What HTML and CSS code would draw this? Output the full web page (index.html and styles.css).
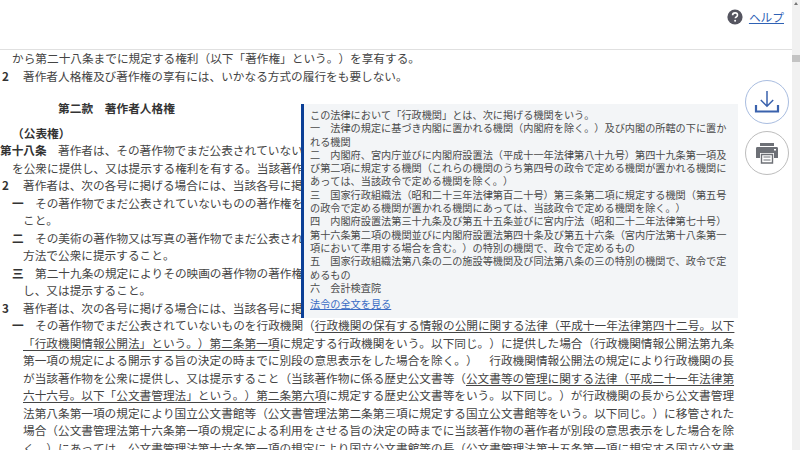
FILE: index.html
```html
<!DOCTYPE html>
<html lang="ja">
<head>
<meta charset="utf-8">
<title>法令</title>
<link rel="stylesheet" href="styles.css">
</head>
<body>
<div class="page">
  <div class="viewport">
    <header class="top">
      <svg class="help-icon" viewBox="0 0 16 16" width="16" height="16"><circle cx="8" cy="8" r="7.6" fill="#555560"/><path d="M5.6 6.200c0-1.500 1.100-2.300 2.500-2.300s2.400.8 2.400 2.100c0 1-.6 1.500-1.300 2-.6.4-.9.7-.9 1.300" fill="none" stroke="#fff" stroke-width="1.600"/><circle cx="8.100" cy="11.700" r="1" fill="#fff"/></svg>
      <a class="help-link" href="#">ヘルプ</a>
    </header>
    <main class="content">
      <p class="para first">から第二十八条までに規定する権利（以下「著作権」という。）を享有する。</p>
      <p class="para num"><b class="n">2</b>著作者人格権及び著作権の享有には、いかなる方式の履行をも要しない。</p>
      <h3 class="section">第二款　著作者人格権</h3>
      <h4 class="caption">（公表権）</h4>
      <p class="para article"><b class="art">第十八条</b>著作者は、その著作物でまだ公表されていないもの（その同意を得ないで公表された著作物を含む。以下この条において同じ。）<br>を公衆に提供し、又は提示する権利を有する。当該著作物を原著作物とする二次的著作物についても、同様とする。</p>
      <p class="para num"><b class="n">2</b>著作者は、次の各号に掲げる場合には、当該各号に掲げる行為について同意したものと推定する。</p>
      <p class="para item"><b class="k">一</b>その著作物でまだ公表されていないものの著作権を譲渡した場合　当該著作物をその著作権の行使により公衆に提供し、又は提示する<br>こと。</p>
      <p class="para item"><b class="k">二</b>その美術の著作物又は写真の著作物でまだ公表されていないものの原作品を譲渡した場合　これらの著作物をその原作品による展示の<br>方法で公衆に提示すること。</p>
      <p class="para item"><b class="k">三</b>第二十九条の規定によりその映画の著作物の著作権が映画製作者に帰属した場合　当該著作物をその著作権の行使により公衆に提供<br>し、又は提示すること。</p>
      <p class="para num"><b class="n">3</b>著作者は、次の各号に掲げる場合には、当該各号に掲げる行為について同意したものとみなす。</p>
      <p class="para item"><b class="k">一</b>その著作物でまだ公表されていないものを行政機関（<u>行政機関の保有する情報の公開に関する法律（平成十一年法律第四十二号。以下<br>「行政機関情報公開法」という。）第二条第一項</u>に規定する行政機関をいう。以下同じ。）に提供した場合（行政機関情報公開法第九条<br>第一項の規定による開示する旨の決定の時までに別段の意思表示をした場合を除く。）　行政機関情報公開法の規定により行政機関の長<br>が当該著作物を公衆に提供し、又は提示すること（当該著作物に係る歴史公文書等（<u>公文書等の管理に関する法律（平成二十一年法律第<br>六十六号。以下「公文書管理法」という。）第二条第六項</u>に規定する歴史公文書等をいう。以下同じ。）が行政機関の長から公文書管理<br>法第八条第一項の規定により国立公文書館等（公文書管理法第二条第三項に規定する国立公文書館等をいう。以下同じ。）に移管された<br>場合（公文書管理法第十六条第一項の規定による利用をさせる旨の決定の時までに当該著作物の著作者が別段の意思表示をした場合を除<br>く。）にあっては、公文書管理法第十六条第一項の規定により国立公文書館等の長（公文書管理法第十五条第一項に規定する国立公文書</p>

      <aside class="popup">
        <p>この法律において「行政機関」とは、次に掲げる機関をいう。</p>
        <p>一　法律の規定に基づき内閣に置かれる機関（内閣府を除く。）及び内閣の所轄の下に置かれる機関</p>
        <p>二　内閣府、宮内庁並びに内閣府設置法（平成十一年法律第八十九号）第四十九条第一項及び第二項に規定する機関（これらの機関のうち第四号の政令で定める機関が置かれる機関にあっては、当該政令で定める機関を除く。）</p>
        <p>三　国家行政組織法（昭和二十三年法律第百二十号）第三条第二項に規定する機関（第五号の政令で定める機関が置かれる機関にあっては、当該政令で定める機関を除く。）</p>
        <p>四　内閣府設置法第三十九条及び第五十五条並びに宮内庁法（昭和二十二年法律第七十号）第十六条第二項の機関並びに内閣府設置法第四十条及び第五十六条（宮内庁法第十八条第一項において準用する場合を含む。）の特別の機関で、政令で定めるもの</p>
        <p>五　国家行政組織法第八条の二の施設等機関及び同法第八条の三の特別の機関で、政令で定めるもの</p>
        <p>六　会計検査院</p>
        <a class="popup-link" href="#">法令の全文を見る</a>
      </aside>

      <div class="float-actions">
        <button class="round blue" aria-label="ダウンロード">
          <svg viewBox="0 0 26 26" width="26" height="26"><path d="M13 2v15M6.800 11l6.200 6.200L19.200 11" fill="none" stroke="#3a62ad" stroke-width="1.500"/><path d="M2 16v6.500h22V16" fill="none" stroke="#3a62ad" stroke-width="2.200"/></svg>
        </button>
        <button class="round gray" aria-label="印刷">
          <svg viewBox="0 0 24 22" width="24" height="22"><path d="M5 1h14v3H5z" fill="#6d7076"/><path d="M2 5h20a1.500 1.500 0 0 1 1 1.500V16h-4v-5H5v5H1V6.500A1.500 1.500 0 0 1 2 5z" fill="#6d7076"/><path d="M6.500 12.500h11V21h-11z" fill="#fff" stroke="#6d7076" stroke-width="1.400"/><path d="M8.500 15h7M8.500 18h7" stroke="#6d7076" stroke-width="1.200"/><path d="M19 7h2v1.500h-2z" fill="#fff"/></svg>
        </button>
      </div>
    </main>
  </div>
  <div class="scrollbar">
    <span class="arrow"></span>
    <span class="thumb"></span>
  </div>
</div>
</body>
</html>
```
FILE: styles.css
```css
* { box-sizing: border-box; }
html, body { margin: 0; padding: 0; height: 100%; overflow: hidden; background: #fff; }
body {
  font-family: "Noto Sans CJK JP", "Noto Sans", sans-serif;
  font-size: 11.66px;
  color: #444;
  text-spacing-trim: space-all;
  font-kerning: none;
}
.page { display: flex; width: 800px; height: 450px; }
.viewport { flex: 1; min-width: 0; display: flex; flex-direction: column; }
.top {
  height: 50px;
  flex: none;
  border-bottom: 1px solid #e0e0e0;
  display: flex;
  justify-content: flex-end;
  align-items: flex-start;
  gap: 6px;
  padding: 9px 8px 0 0;
}
.help-icon { display: block; }
.help-link { color: #2f62b5; font-size: 11.7px; line-height: 16px; }
.content { position: relative; flex: 1; min-height: 0; overflow: hidden; padding-top: 0; }
.para { margin: 0; line-height: 17.5px; white-space: nowrap; }
.para.first { padding-left: 12px; margin-top: -1px; }
.para.num { padding-left: 23px; }
.para.article { padding-left: 12px; text-indent: -12px; }
.para.item { padding-left: 23px; text-indent: -11px; }
.n { display: inline-block; width: 21px; margin-left: -21px; text-indent: 0; color: #333; }
.art { display: inline-block; width: 58px; text-indent: 0; color: #333; }
.k { display: inline-block; width: 23px; text-indent: 0; color: #333; }
u { text-underline-offset: 2px; }
.section {
  margin: 15px 0 0;
  padding-left: 58px;
  font-size: 11.7px;
  font-weight: 700;
  line-height: 17.5px;
  color: #333;
}
.caption {
  margin: 7px 0 0;
  padding-left: 12px;
  font-size: 11.7px;
  font-weight: 700;
  line-height: 17.5px;
  color: #333;
}
.popup {
  position: absolute;
  left: 301px;
  top: 54px;
  width: 437px;
  height: 214px;
  padding: 4px 10px 0 6px;
  background: #f3f5f7;
  border-left: 3px solid #0b3f96;
  font-size: 10.17px;
  line-height: 13.3px;
  color: #4a4a4a;
}
.popup p { margin: 0; }
.popup-link { display: block; margin-top: 3px; color: #3a6cc4; }
.float-actions {
  position: absolute;
  left: 745px;
  top: 30px;
  display: flex;
  flex-direction: column;
  gap: 7px;
}
.round {
  width: 44px;
  height: 44px;
  padding: 0;
  border-radius: 50%;
  background: #fff;
  display: flex;
  align-items: center;
  justify-content: center;
}
.round.blue { border: 1px solid #a9bde0; }
.round.gray { border: 1px solid #bdbdbd; }
.scrollbar { flex: none; width: 8px; height: 450px; background: #f1f1f1; display: flex; flex-direction: column; align-items: center; }
.arrow { margin-top: 2px; width: 0; height: 0; border-left: 2px solid transparent; border-right: 2px solid transparent; border-bottom: 3px solid #777; }
.thumb { margin-top: 50px; width: 8px; height: 7px; background: #c4c4c4; }
```
